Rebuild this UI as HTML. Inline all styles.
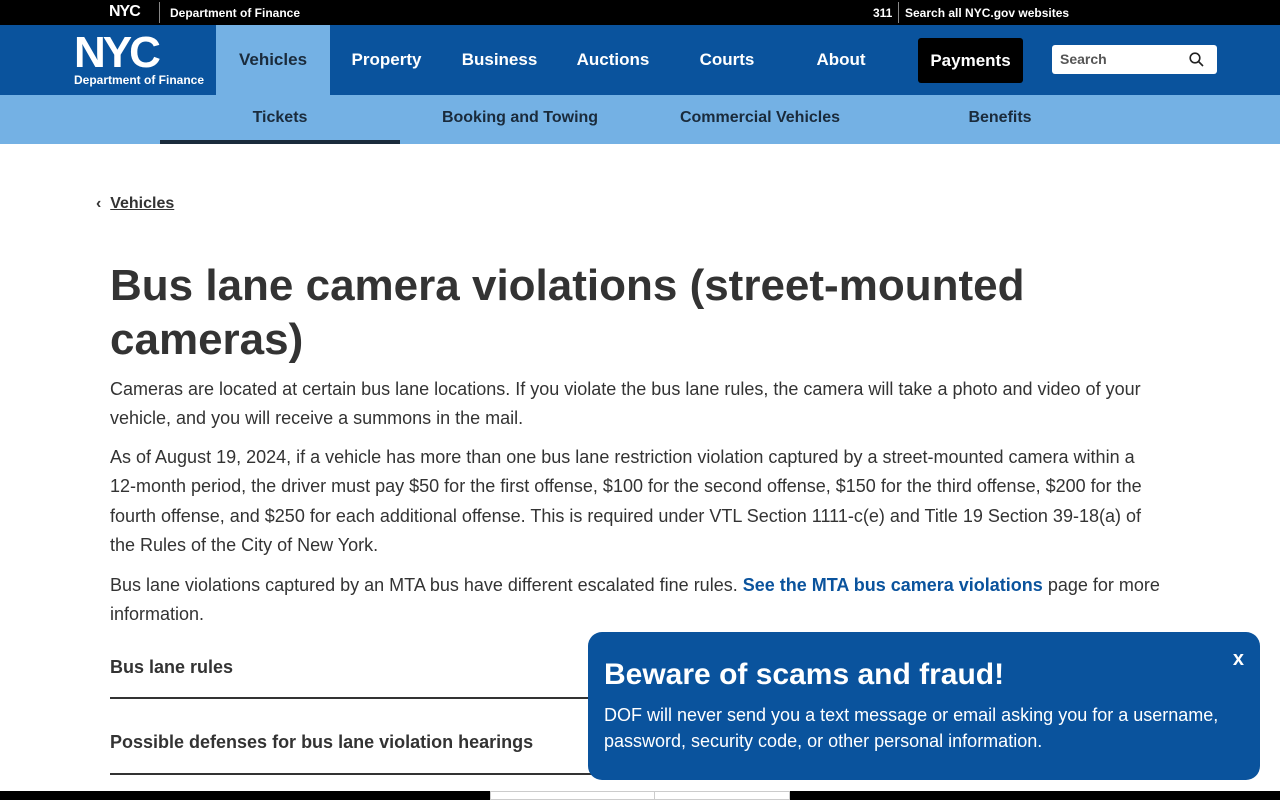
<!DOCTYPE html>
<html><head><meta charset="utf-8"><style>
*{margin:0;padding:0;box-sizing:border-box}
body{width:1280px;height:800px;overflow:hidden;font-family:"Liberation Sans",Arial,sans-serif;background:#fff;position:relative;color:#333}
.top{height:25px;background:#000;color:#fff;font-size:12px;font-weight:bold;position:relative}
.top span{position:absolute;top:6px}
.nav{height:70px;background:#0a539d;position:relative;color:#fff}
.nav .it{position:absolute;top:0;height:70px;line-height:70px;font-size:17px;font-weight:bold;text-align:center}
.sub{height:49px;background:#74b1e4;position:relative;font-size:16px;font-weight:bold;color:#1a2b3c}
.sub div{position:absolute;top:0;width:240px;text-align:center;line-height:45px}
h1{position:absolute;left:110px;top:259px;font-size:44px;line-height:54px;font-weight:bold;color:#333;width:1000px}
p{position:absolute;left:110px;width:1055px;font-size:18px;line-height:29.3px;color:#333}
.acc{position:absolute;left:110px;width:1060px;font-size:18px;font-weight:bold;border-bottom:2px solid #333;height:30px}
.pop{position:absolute;left:588px;top:632px;width:672px;height:148px;background:#0a539d;border-radius:14px;color:#fff}
</style></head><body>
<div class="top">
<span style="left:109px;top:3px;font-size:16px;font-weight:900;letter-spacing:-1px">NYC</span>
<div style="position:absolute;left:159px;top:2px;width:1px;height:21px;background:#888"></div>
<span style="left:170px">Department of Finance</span>
<span style="left:873px">311</span>
<div style="position:absolute;left:898px;top:2px;width:1px;height:21px;background:#888"></div>
<span style="left:905px">Search all NYC.gov websites</span>
</div>
<div class="nav">
<div style="position:absolute;left:74px;top:8px;font-size:44px;font-weight:900;line-height:40px;letter-spacing:-3px">NYC</div>
<div style="position:absolute;left:74px;top:48px;font-size:12px;font-weight:bold">Department of Finance</div>
<div class="it" style="left:216px;width:114px;background:#74b1e4;color:#1a2b3c">Vehicles</div>
<div class="it" style="left:330px;width:113px">Property</div>
<div class="it" style="left:443px;width:113px">Business</div>
<div class="it" style="left:556px;width:114px">Auctions</div>
<div class="it" style="left:670px;width:114px">Courts</div>
<div class="it" style="left:784px;width:114px">About</div>
<div style="position:absolute;left:918px;top:13px;width:105px;height:45px;background:#000;border-radius:3px;text-align:center;line-height:45px;font-size:17px;font-weight:bold">Payments</div>
<div style="position:absolute;left:1052px;top:20px;width:165px;height:29px;background:#fff;border-radius:3px;color:#555;font-size:14px;font-weight:bold;line-height:29px;padding-left:8px">Search
<svg style="position:absolute;right:13px;top:7px" width="15" height="15" viewBox="0 0 15 15"><circle cx="6" cy="6" r="4.8" fill="none" stroke="#222" stroke-width="1.6"/><path d="M9.5 9.5L14 14" stroke="#222" stroke-width="1.6"/></svg></div>
</div>
<div class="sub">
<div style="left:160px">Tickets</div>
<div style="left:400px">Booking and Towing</div>
<div style="left:640px">Commercial Vehicles</div>
<div style="left:880px">Benefits</div>
<span style="position:absolute;left:160px;top:45px;width:240px;height:4px;background:#1a2b3c"></span>
</div>
<div style="position:absolute;left:96px;top:195px;font-size:16px;font-weight:bold;color:#333">‹&nbsp;&nbsp;<u>Vehicles</u></div>
<h1>Bus lane camera violations (street-mounted cameras)</h1>
<p style="top:375px">Cameras are located at certain bus lane locations. If you violate the bus lane rules, the camera will take a photo and video of your vehicle, and you will receive a summons in the mail.</p>
<p style="top:443px">As of August 19, 2024, if a vehicle has more than one bus lane restriction violation captured by a street-mounted camera within a <span style="white-space:nowrap">12-month</span> period, the driver must pay $50 for the first offense, $100 for the second offense, $150 for the third offense, $200 for the fourth offense, and $250 for each additional offense. This is required under VTL Section 1111-c(e) and Title 19 Section 39-18(a) of the Rules of the City of New York.</p>
<p style="top:571px">Bus lane violations captured by an MTA bus have different escalated fine rules. <b style="color:#0a539d">See the MTA bus camera violations</b> page for more information.</p>
<div class="acc" style="top:657px;height:42px">Bus lane rules</div>
<div class="acc" style="top:732px;height:43px">Possible defenses for bus lane violation hearings</div>
<div class="pop">
<div style="position:absolute;left:16px;top:26px;font-size:30px;font-weight:bold">Beware of scams and fraud!</div>
<div style="position:absolute;right:16px;top:16px;font-size:20px;font-weight:bold">x</div>
<div style="position:absolute;left:16px;top:70px;font-size:18px;line-height:26px;width:650px">DOF will never send you a text message or email asking you for a username, password, security code, or other personal information.</div>
</div>
<div style="position:absolute;left:0;top:791px;width:1280px;height:9px;background:#000"></div>
<div style="position:absolute;left:490px;top:791px;width:300px;height:9px;background:#fff;border:1px solid #ccc"></div>
<div style="position:absolute;left:654px;top:791px;width:1px;height:9px;background:#ccc"></div>
</body></html>
